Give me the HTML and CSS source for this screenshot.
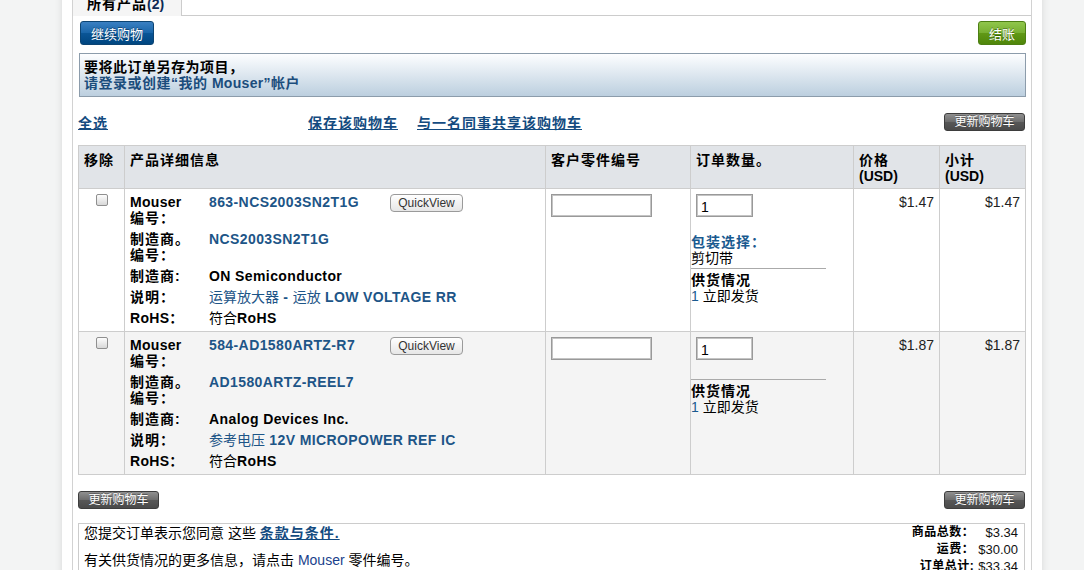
FILE: index.html
```html
<!DOCTYPE html>
<html lang="zh-CN">
<head>
<meta charset="utf-8">
<title>购物车</title>
<link rel="stylesheet" href="styles.css">
</head>
<body>
<div class="page">
  <div class="frame">
    <div class="tabs">
      <div class="tab">所有产品<span class="tab-count">(2)</span></div>
      <div class="tab-rest"></div>
    </div>
    <div class="panel">
      <div class="topbar">
        <button class="btn btn-blue">继续购物</button>
        <button class="btn btn-green">结账</button>
      </div>
      <div class="notice">
        <div class="notice-l1">要将此订单另存为项目，</div>
        <a class="notice-l2" href="#">请登录或创建“我的 <span class="lat">Mouser</span>”帐户</a>
      </div>
      <div class="actions">
        <div class="act-left"><a href="#" class="link">全选</a></div>
        <div class="act-mid">
          <a href="#" class="link">保存该购物车</a>
          <a href="#" class="link">与一名同事共享该购物车</a>
        </div>
        <button class="btn btn-grey">更新购物车</button>
      </div>
      <table class="cart">
        <colgroup>
          <col class="c1"><col class="c2"><col class="c3"><col class="c4"><col class="c5"><col class="c6">
        </colgroup>
        <thead>
          <tr>
            <th>移除</th>
            <th>产品详细信息</th>
            <th>客户零件编号</th>
            <th>订单数量。</th>
            <th>价格<br><span class="usd">(USD)</span></th>
            <th>小计<br><span class="usd">(USD)</span></th>
          </tr>
        </thead>
        <tbody>
          <tr>
            <td class="rm"><input type="checkbox" class="chk"></td>
            <td>
              <div class="pd">
                <div class="lbl"><span class="lat">Mouser</span><br>编号：</div>
                <div class="val">863-NCS2003SN2T1G</div>
                <div class="qvcell"><button class="qv">QuickView</button></div>
                <div class="lbl">制造商。<br>编号：</div>
                <div class="val wide">NCS2003SN2T1G</div>
                <div class="lbl">制造商:</div>
                <div class="val wide blk">ON Semiconductor</div>
                <div class="lbl">说明：</div>
                <div class="val wide"><span class="n">运算放大器</span> - <span class="n">运放</span> LOW VOLTAGE RR</div>
                <div class="lbl"><span class="lat">RoHS</span>：</div>
                <div class="val wide blk"><span class="n">符合</span>RoHS</div>
              </div>
            </td>
            <td><input type="text" class="cpn"></td>
            <td class="qty">
              <input type="text" class="qin" value="1">
              <div class="pack">
                <div class="pack-title">包装选择：</div>
                <div>剪切带</div>
              </div>
              <div class="avail">
                <div class="avail-title">供货情况</div>
                <div><span class="num">1</span> 立即发货</div>
              </div>
            </td>
            <td class="price">$1.47</td>
            <td class="price">$1.47</td>
          </tr>
          <tr class="alt">
            <td class="rm"><input type="checkbox" class="chk"></td>
            <td>
              <div class="pd">
                <div class="lbl"><span class="lat">Mouser</span><br>编号：</div>
                <div class="val">584-AD1580ARTZ-R7</div>
                <div class="qvcell"><button class="qv">QuickView</button></div>
                <div class="lbl">制造商。<br>编号：</div>
                <div class="val wide">AD1580ARTZ-REEL7</div>
                <div class="lbl">制造商:</div>
                <div class="val wide blk">Analog Devices Inc.</div>
                <div class="lbl">说明：</div>
                <div class="val wide"><span class="n">参考电压</span> 12V MICROPOWER REF IC</div>
                <div class="lbl"><span class="lat">RoHS</span>：</div>
                <div class="val wide blk"><span class="n">符合</span>RoHS</div>
              </div>
            </td>
            <td><input type="text" class="cpn"></td>
            <td class="qty">
              <input type="text" class="qin" value="1">
              <div class="pack"></div>
              <div class="avail">
                <div class="avail-title">供货情况</div>
                <div><span class="num">1</span> 立即发货</div>
              </div>
            </td>
            <td class="price">$1.87</td>
            <td class="price">$1.87</td>
          </tr>
        </tbody>
      </table>
      <div class="actions2">
        <button class="btn btn-grey">更新购物车</button>
        <button class="btn btn-grey">更新购物车</button>
      </div>
      <div class="summary">
        <div class="terms">
          <p class="t1">您提交订单表示您同意 这些 <a href="#" class="tlink">条款与条件.</a></p>
          <p class="t2">有关供货情况的更多信息，请点击 <span class="mouser">Mouser</span> 零件编号。</p>
        </div>
        <div class="totals">
          <div class="tl">商品总数：</div><div class="tv">$3.34</div>
          <div class="tl">运费：</div><div class="tv">$30.00</div>
          <div class="tl">订单总计:</div><div class="tv">$33.34</div>
        </div>
      </div>
    </div>
  </div>
</div>
</body>
</html>
```
FILE: styles.css
```css
html, body {
  margin: 0;
  padding: 0;
}
body {
  background: #f3f4f4;
  font-family: "Liberation Sans", "Noto Sans CJK SC", sans-serif;
  font-size: 14px;
  color: #000;
  overflow: hidden;
}
.page {
  width: 960px;
  margin: -7px 0 0 62px;
  padding: 0 10px;
  background: #fff;
  box-shadow: 0 0 7px rgba(0, 0, 0, 0.12);
  min-height: 620px;
}
.frame {
  border-left: 1px solid #d2d2d2;
  border-right: 1px solid #d2d2d2;
  min-height: 620px;
}
.tabs {
  display: flex;
  height: 23px;
}
.tab {
  box-sizing: border-box;
  width: 109px;
  background: #f5f5f5;
  border-right: 1px solid #ccc;
  font-weight: bold;
  line-height: 18px;
  padding: 2px 0 0 14px;
  letter-spacing: 1px;
}
.tab-count {
  letter-spacing: 0;
  color: #0d2a55;
}
.tab-rest {
  flex: 1;
  border-bottom: 1px solid #ccc;
}
.panel {
  padding: 5px 5px 0;
}
.topbar {
  display: flex;
  justify-content: space-between;
}
.btn {
  font-family: "Liberation Sans", "Noto Sans CJK SC", sans-serif;
  border: 1px solid;
  border-radius: 3px;
  color: #fff;
  padding: 0;
  cursor: pointer;
  box-sizing: border-box;
  text-shadow: 0 -1px 0 rgba(0, 0, 0, 0.35);
}
.btn-blue {
  width: 74px;
  height: 24px;
  margin-left: 2px;
  font-size: 13px;
  background: linear-gradient(#3a80c2 0%, #1a66aa 48%, #0a5596 52%, #004680 100%);
  border-color: #0c4473;
}
.btn-green {
  width: 48px;
  height: 24px;
  font-size: 13px;
  background: linear-gradient(#90c64c 0%, #78b032 48%, #609816 52%, #4f860a 100%);
  border-color: #4d7f14;
}
.btn-grey {
  width: 81px;
  height: 18px;
  font-size: 12px;
  line-height: 16px;
  background: linear-gradient(#909090 0%, #6d6d6d 48%, #575757 52%, #4a4a4a 100%);
  border-color: #3d3d3d;
}
.actions .btn-grey,
.actions2 .btn-grey:last-child {
  margin-right: 1px;
}
.notice {
  margin: 8px 0 0 1px;
  border: 1px solid #8c9cab;
  background: linear-gradient(#fdfeff, #bccfdf);
  padding: 5px 4px;
  font-weight: bold;
  line-height: 16px;
  letter-spacing: 0.5px;
}
.notice-l2 {
  display: block;
  color: #1b4d7c;
  text-decoration: none;
}
.lat {
  letter-spacing: 0.3px;
}
.actions {
  display: flex;
  align-items: center;
  margin-top: 16px;
  height: 18px;
}
.act-left {
  width: 230px;
}
.act-mid {
  flex: 1;
  display: flex;
  gap: 19px;
}
.link {
  color: #144b80;
  font-weight: bold;
  text-decoration: underline;
  letter-spacing: 1px;
}
.cart {
  width: 947px;
  margin-top: 14px;
  border-collapse: collapse;
  table-layout: fixed;
}
.c1 { width: 46px; }
.c2 { width: 421px; }
.c3 { width: 145px; }
.c4 { width: 163px; }
.c5 { width: 86px; }
.c6 { width: 86px; }
.cart th,
.cart td {
  border: 1px solid #cdcdcd;
  vertical-align: top;
  text-align: left;
  padding: 5px;
  line-height: 16px;
}
.cart th {
  background: #e1e4e8;
  font-weight: bold;
  padding: 6px 5px 4px;
  letter-spacing: 1px;
}
.usd {
  letter-spacing: 0;
}
.alt td {
  background: #f4f4f4;
}
.rm {
  text-align: center;
}
.chk {
  appearance: none;
  -webkit-appearance: none;
  display: block;
  width: 12px;
  height: 12px;
  box-sizing: border-box;
  margin: 0 auto;
  border: 1px solid #8f8f8f;
  border-radius: 2px;
  background: linear-gradient(#fdfdfd, #d8d8d8);
}
.pd {
  display: grid;
  grid-template-columns: 79px 181px auto;
  row-gap: 5px;
  line-height: 16px;
}
.lbl {
  font-weight: bold;
  letter-spacing: 1px;
}
.val {
  font-weight: bold;
  color: #1d5587;
  letter-spacing: 0.4px;
}
.val.wide {
  grid-column: 2 / 4;
}
.val.blk {
  color: #000;
}
.n {
  font-weight: normal;
  letter-spacing: 0;
}
.qvcell {
  line-height: 0;
}
.qv {
  width: 73px;
  height: 18px;
  padding: 0;
  box-sizing: border-box;
  border: 1px solid #9a9a9a;
  border-radius: 4px;
  background: linear-gradient(#ffffff, #e6e6e6);
  font-family: "Liberation Sans", sans-serif;
  font-size: 12px;
  color: #333;
  line-height: 16px;
}
.cpn,
.qin {
  display: block;
  height: 23px;
  box-sizing: border-box;
  margin: 0;
  border: 1px solid #999;
  box-shadow: inset 0 0 0 1px #c4c4c4;
  font-family: "Liberation Sans", sans-serif;
  font-size: 14px;
  padding: 2px 4px 0;
  background: #fff;
  color: #000;
}
.cpn {
  width: 101px;
}
.cart td.qty {
  padding-left: 0;
  padding-right: 0;
}
.qin {
  width: 57px;
  margin-left: 5px;
}
.pack {
  width: 135px;
  margin-top: 17px;
  padding-bottom: 2px;
  border-bottom: 1px solid #aaa;
}
.pack-title {
  color: #1a5a8f;
  font-weight: bold;
  letter-spacing: 1px;
}
.avail {
  margin-top: 3px;
}
.avail-title {
  font-weight: bold;
  letter-spacing: 1px;
}
.num {
  color: #1a5a8f;
}
.cart td.price {
  text-align: right;
  color: #222;
}
.actions2 {
  display: flex;
  justify-content: space-between;
  margin-top: 16px;
}
.summary {
  margin-top: 14px;
  border: 1px solid #ccc;
  border-bottom: none;
  display: flex;
  justify-content: space-between;
  padding: 0 6px 0 5px;
  height: 60px;
  width: 947px;
  box-sizing: border-box;
}
.terms {
  padding-top: 1px;
  line-height: 17px;
}
.terms p {
  margin: 0;
}
.t1 {
  margin-bottom: 10px !important;
}
.tlink {
  color: #144b80;
  font-weight: bold;
  text-decoration: underline;
  letter-spacing: 1px;
}
.mouser {
  color: #1a3f8c;
}
.totals {
  display: grid;
  grid-template-columns: auto auto;
  column-gap: 4px;
  font-size: 12px;
  line-height: 17px;
  text-align: right;
  align-content: start;
}
.tl {
  font-weight: bold;
  letter-spacing: 0.5px;
}
.tv {
  color: #111;
  font-size: 13px;
}
```
